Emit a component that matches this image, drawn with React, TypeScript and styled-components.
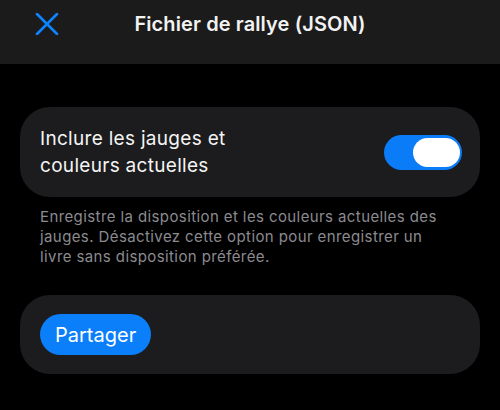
import React, { useState } from 'react';
import styled, { createGlobalStyle } from 'styled-components';

const GlobalStyle = createGlobalStyle`
  html, body {
    margin: 0;
    padding: 0;
    background: #000;
  }
  body {
    font-family: Inter, "Noto Sans", "Liberation Sans", sans-serif;
    -webkit-font-smoothing: antialiased;
  }
`

const Screen = styled.div`
  width: 500px;
  height: 410px;
  background: #000;
  display: flex;
  flex-direction: column;
  overflow: hidden;
`

const Header = styled.header`
  height: 64px;
  background: #1b1b1b;
  display: grid;
  grid-template-columns: 80px 1fr 80px;
  align-items: start;
`

const CloseButton = styled.button`
  background: none;
  border: 0;
  padding: 0;
  margin: 13px 0 0 35px;
  width: 24px;
  height: 22px;
  cursor: pointer;
  display: flex;
  align-items: center;
  justify-content: center;
`

const Title = styled.h1`
  margin: 10px 0 0;
  text-align: center;
  color: #f2f2f2;
  font-size: 20px;
  font-weight: 600;
  line-height: 28px;
  letter-spacing: 0.1px;
`

const Content = styled.main`
  display: flex;
  flex-direction: column;
  padding: 43px 20px 0;
`

const Card = styled.section<{ $pad: string }>`
  background: #1c1c1e;
  border-radius: 30px;
  padding: ${p => p.$pad};
  display: flex;
  align-items: center;
`

const Label = styled.div`
  flex: 1;
  color: #f4f4f4;
  font-size: 19px;
  line-height: 27px;
  letter-spacing: 0.3px;
`

const Track = styled.button<{ $on: boolean }>`
  position: relative;
  width: 78px;
  height: 35px;
  border: 0;
  border-radius: 18px;
  padding: 0;
  background: ${p => (p.$on ? '#0a7cf7' : '#39393d')};
  cursor: pointer;
  flex-shrink: 0;
`

const Knob = styled.span<{ $on: boolean }>`
  position: absolute;
  top: 3px;
  left: ${p => (p.$on ? '29px' : '3px')};
  width: 47px;
  height: 29px;
  border-radius: 15px;
  background: #fff;
`

const Footnote = styled.p`
  margin: 10px 30px 28px 20px;
  color: #8b8b90;
  font-size: 15px;
  line-height: 20px;
  letter-spacing: 0.4px;
`

const ShareButton = styled.button`
  background: #0a7ff9;
  color: #fff;
  border: 0;
  border-radius: 21px;
  height: 41px;
  padding: 0 15px;
  font-family: inherit;
  font-size: 20px;
  cursor: pointer;
`

const App: React.FC = () => {
  const [on, setOn] = useState(true);
  return (
    <Screen>
      <GlobalStyle />
      <Header>
        <CloseButton aria-label="Fermer">
          <svg width="24" height="22" viewBox="0 0 24 22" fill="none">
            <path d="M2 1 L22 21 M22 1 L2 21" stroke="#0a84ff" strokeWidth="2.6" strokeLinecap="round" />
          </svg>
        </CloseButton>
        <Title>Fichier de rallye (JSON)</Title>
        <div />
      </Header>
      <Content>
        <Card $pad="18px 18px 18px 20px">
          <Label>
            Inclure les jauges et
            <br />
            couleurs actuelles
          </Label>
          <Track $on={on} onClick={() => setOn(!on)} aria-pressed={on}>
            <Knob $on={on} />
          </Track>
        </Card>
        <Footnote>
          Enregistre la disposition et les couleurs actuelles des jauges.
          Désactivez cette option pour enregistrer un livre sans disposition préférée.
        </Footnote>
        <Card $pad="19px 20px">
          <ShareButton>Partager</ShareButton>
        </Card>
      </Content>
    </Screen>
  );
}

export default App;
